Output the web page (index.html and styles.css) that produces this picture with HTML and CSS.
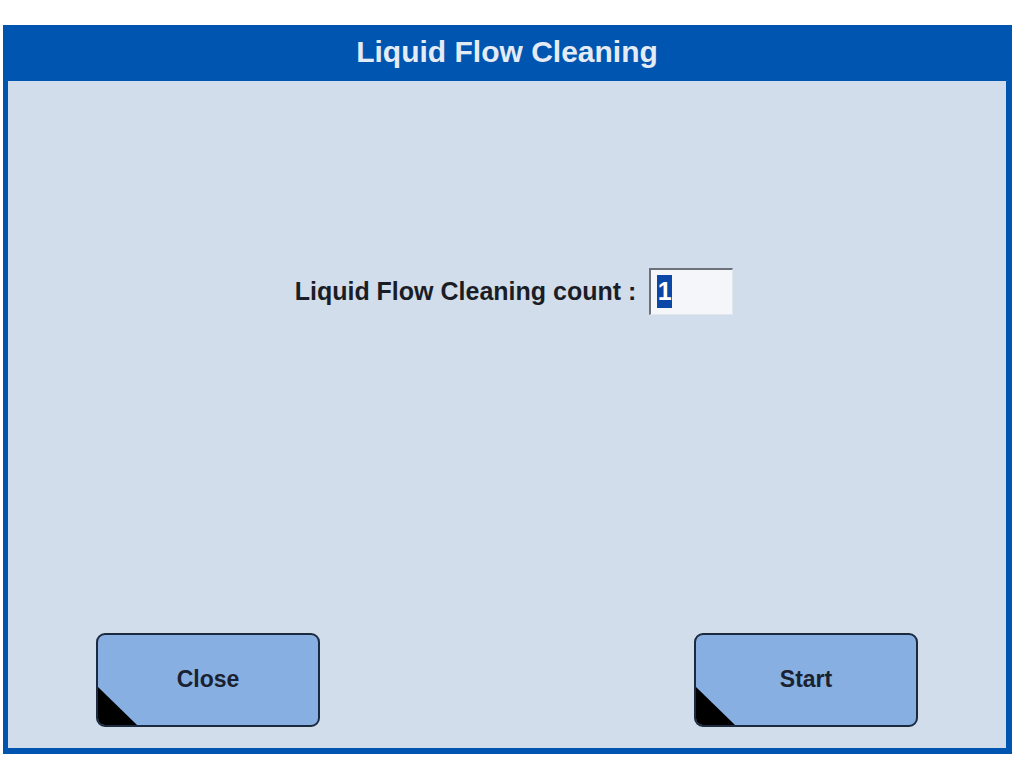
FILE: index.html
```html
<!DOCTYPE html>
<html>
<head>
<meta charset="utf-8">
<link rel="stylesheet" href="styles.css">
</head>
<body>
<div class="dialog">
  <div class="titlebar">Liquid Flow Cleaning</div>
  <div class="content">
    <div class="field-row">
      <span class="label">Liquid Flow Cleaning count :</span>
      <div class="count-box"><span class="sel">1</span></div>
    </div>
    <div class="buttons">
      <div class="btn"><span>Close</span></div>
      <div class="btn"><span>Start</span></div>
    </div>
  </div>
</div>
</body>
</html>
```
FILE: styles.css
```css
html, body {
  margin: 0;
  padding: 0;
  background: #ffffff;
  font-family: "Liberation Sans", Arial, sans-serif;
}
body {
  padding: 25px 9px 15px 3px;
}
.dialog {
  width: 1009px;
  height: 729px;
  box-sizing: border-box;
  background: #0055b0;
  padding: 0 6px 6px 5px;
  display: flex;
  flex-direction: column;
}
.titlebar {
  height: 56px;
  display: flex;
  align-items: center;
  justify-content: center;
  color: #e4ebf5;
  font-weight: bold;
  font-size: 30px;
  padding-bottom: 2px;
  box-sizing: border-box;
}
.content {
  flex: 1;
  background: #d1ddea;
  display: flex;
  flex-direction: column;
  justify-content: space-between;
  padding: 187px 88px 21px 88px;
}
.field-row {
  display: flex;
  align-items: center;
  justify-content: center;
  gap: 13px;
  padding-left: 14px;
}
.label {
  font-size: 25px;
  font-weight: bold;
  color: #1b1d26;
}
.count-box {
  width: 84px;
  height: 47px;
  box-sizing: border-box;
  background: #f5f6f9;
  border-top: 2px solid #6d717a;
  border-left: 2px solid #6d717a;
  border-right: 1px solid #e2e6ee;
  border-bottom: 1px solid #e2e6ee;
  padding: 5px 0 0 6px;
}
.sel {
  display: inline-block;
  width: 15px;
  height: 33px;
  line-height: 33px;
  background: #0b47a6;
  color: #ffffff;
  font-size: 25px;
  font-weight: bold;
  text-align: center;
}
.buttons {
  display: flex;
  justify-content: space-between;
}
.btn {
  position: relative;
  width: 224px;
  height: 94px;
  box-sizing: border-box;
  border: 2px solid #1c2a3f;
  border-radius: 9px;
  background: #87afe1;
  overflow: hidden;
  display: flex;
  align-items: center;
  justify-content: center;
  font-size: 23px;
  font-weight: bold;
  color: #1a2130;
}
.btn span {
  padding-bottom: 2px;
}
.btn::after {
  content: "";
  position: absolute;
  left: 0;
  bottom: 0;
  width: 0;
  height: 0;
  border-style: solid;
  border-width: 38px 0 0 39px;
  border-color: transparent transparent transparent #000000;
}
```
